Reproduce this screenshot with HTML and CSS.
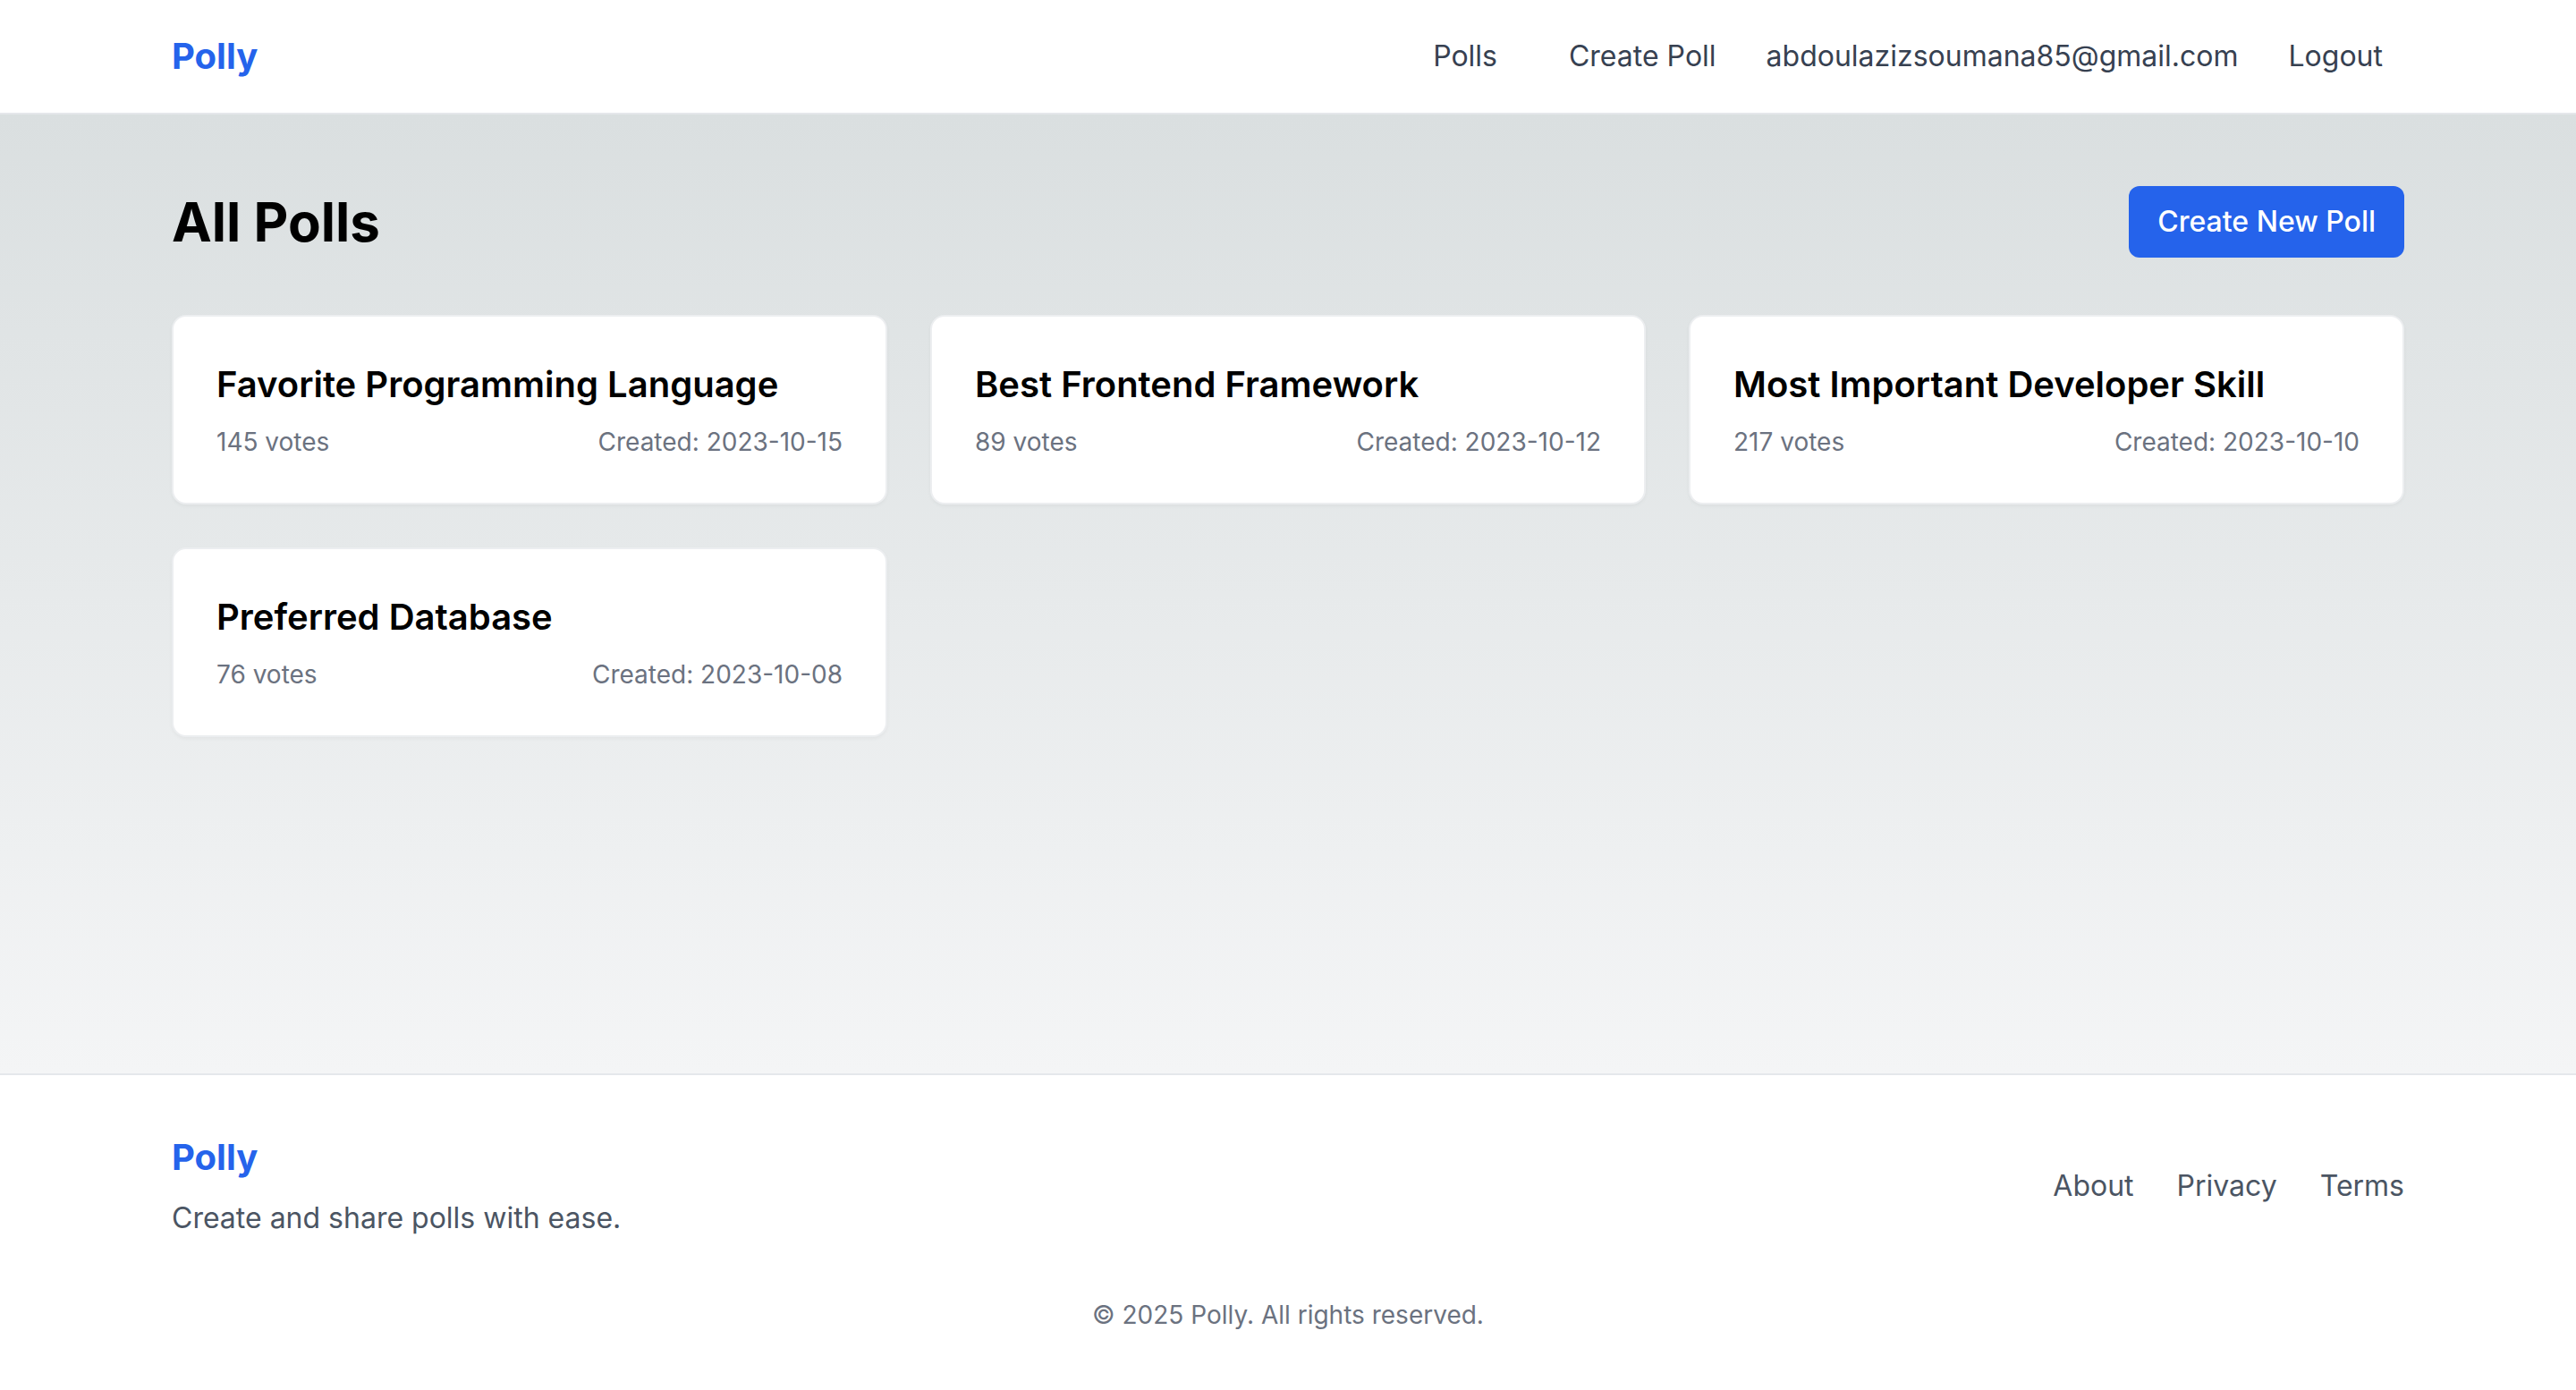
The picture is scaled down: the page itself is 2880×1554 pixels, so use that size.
FILE: index.html
```html
<!DOCTYPE html>
<html lang="en">
<head>
<meta charset="utf-8">
<title>Polly</title>
<link rel="stylesheet" href="styles.css">
</head>
<body>
<header class="site-header">
  <div class="container header-inner">
    <a class="brand" href="#">Polly</a>
    <nav class="nav">
      <a class="nav-link" href="#">Polls</a>
      <a class="nav-link" href="#">Create Poll</a>
      <span class="nav-email">abdoulazizsoumana85@gmail.com</span>
      <button class="nav-link logout">Logout</button>
    </nav>
  </div>
</header>
<main class="main">
  <div class="container">
    <div class="title-row">
      <h1 class="page-title">All Polls</h1>
      <a class="btn-primary" href="#">Create New Poll</a>
    </div>
    <div class="poll-grid">
      <div class="poll-card">
        <h2 class="poll-title">Favorite Programming Language</h2>
        <div class="poll-meta"><span>145 votes</span><span>Created: 2023-10-15</span></div>
      </div>
      <div class="poll-card">
        <h2 class="poll-title">Best Frontend Framework</h2>
        <div class="poll-meta"><span>89 votes</span><span>Created: 2023-10-12</span></div>
      </div>
      <div class="poll-card">
        <h2 class="poll-title">Most Important Developer Skill</h2>
        <div class="poll-meta"><span>217 votes</span><span>Created: 2023-10-10</span></div>
      </div>
      <div class="poll-card">
        <h2 class="poll-title">Preferred Database</h2>
        <div class="poll-meta"><span>76 votes</span><span>Created: 2023-10-08</span></div>
      </div>
    </div>
  </div>
</main>
<footer class="site-footer">
  <div class="container">
    <div class="footer-top">
      <div class="footer-brand">
        <div class="brand">Polly</div>
        <p class="tagline">Create and share polls with ease.</p>
      </div>
      <div class="footer-links">
        <a href="#">About</a>
        <a href="#">Privacy</a>
        <a href="#">Terms</a>
      </div>
    </div>
    <p class="copyright">© 2025 Polly. All rights reserved.</p>
  </div>
</footer>
</body>
</html>
```
FILE: styles.css
```css
* { box-sizing: border-box; }
html, body { margin: 0; padding: 0; }
body {
  font-family: Inter, "Noto Sans", "Liberation Sans", sans-serif;
  min-height: 100vh;
  display: flex;
  flex-direction: column;
  background: #ffffff;
  color: #0a0a0a;
}
a { text-decoration: none; color: inherit; }
.container {
  max-width: 2560px;
  margin: 0 auto;
  padding: 0 32px;
  width: 100%;
}
.site-header {
  background: #ffffff;
  border-bottom: 2px solid #e5e7eb;
}
.header-inner {
  height: 126px;
  display: flex;
  align-items: center;
  justify-content: space-between;
}
.brand {
  font-size: 40px;
  line-height: 56px;
  font-weight: 700;
  color: #2563eb;
}
.nav {
  display: flex;
  align-items: center;
  gap: 32px;
}
.nav-link {
  font-family: inherit;
  font-size: 32px;
  line-height: 48px;
  color: #374151;
  padding: 8px 24px;
  background: none;
  border: none;
  cursor: pointer;
}
.nav-email {
  font-size: 32px;
  line-height: 48px;
  color: #374151;
}
.main {
  flex: 1;
  background: linear-gradient(to bottom, #dadfe0, #f4f5f6);
  padding: 80px 0;
}
.title-row {
  display: flex;
  align-items: center;
  justify-content: space-between;
  height: 80px;
}
.page-title {
  margin: 0;
  font-size: 60px;
  line-height: 72px;
  font-weight: 700;
  color: #000;
}
.btn-primary {
  background: #2563eb;
  color: #ffffff;
  font-size: 32px;
  line-height: 48px;
  font-weight: 500;
  padding: 16px 32px;
  border-radius: 12px;
}
.poll-grid {
  margin-top: 64px;
  display: grid;
  grid-template-columns: repeat(3, 1fr);
  gap: 48px;
}
.poll-card {
  background: #ffffff;
  border: 2px solid #eceef0;
  border-radius: 16px;
  padding: 48px;
  box-shadow: 0 2px 4px rgba(0,0,0,0.04);
}
.poll-title {
  margin: 0 0 16px;
  font-size: 40px;
  line-height: 56px;
  font-weight: 600;
  color: #000;
}
.poll-meta {
  display: flex;
  justify-content: space-between;
  font-size: 28px;
  line-height: 40px;
  color: #6b7280;
}
.site-footer {
  background: #ffffff;
  border-top: 2px solid #e5e7eb;
  padding: 64px 0;
}
.footer-top {
  display: flex;
  align-items: center;
  justify-content: space-between;
}
.tagline {
  margin: 16px 0 0;
  font-size: 32px;
  line-height: 48px;
  color: #4b5563;
}
.footer-links {
  display: flex;
  gap: 48px;
  font-size: 32px;
  line-height: 48px;
  color: #4b5563;
}
.copyright {
  margin: 64px 0 0;
  text-align: center;
  font-size: 28px;
  line-height: 40px;
  color: #6b7280;
}
```
